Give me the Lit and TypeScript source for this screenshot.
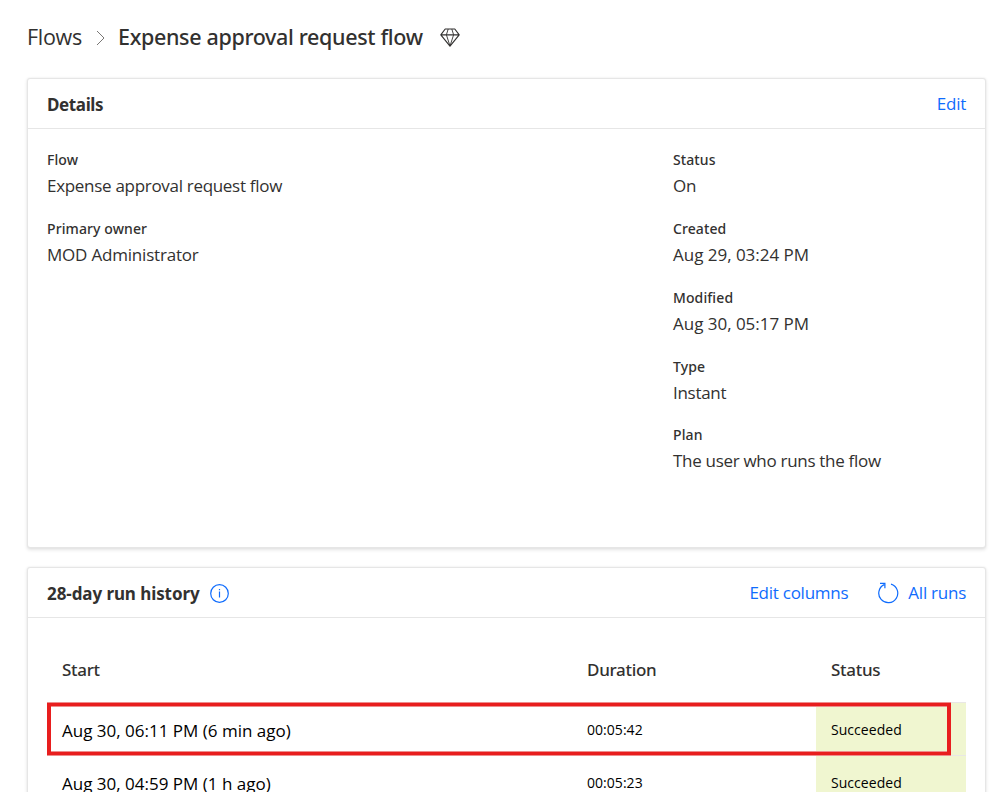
import { LitElement, html, css } from "lit";
import { customElement } from "lit/decorators.js";
import { classMap } from "lit/directives/class-map.js";

interface Field { label: string; value: string; kind?: "date" | "person"; }
interface Run { start: string; duration: string; status: string; }

const FLOW_FIELDS: Field[] = [
  { label: "Flow", value: "Expense approval request flow" },
  { label: "Primary owner", value: "MOD Administrator", kind: "person" },
];

const STATE_FIELDS: Field[] = [
  { label: "Status", value: "On" },
  { label: "Created", value: "Aug 29, 03:24 PM", kind: "date" },
  { label: "Modified", value: "Aug 30, 05:17 PM", kind: "date" },
  { label: "Type", value: "Instant" },
  { label: "Plan", value: "The user who runs the flow" },
];

const RUNS: Run[] = [
  { start: "Aug 30, 06:11 PM (6 min ago)", duration: "00:05:42", status: "Succeeded" },
  { start: "Aug 30, 04:59 PM (1 h ago)", duration: "00:05:23", status: "Succeeded" },
];

@customElement("app-root")
export class AppRoot extends LitElement {
  static styles = css`
    :host {
      display: flex;
      flex-direction: column;
      box-sizing: border-box;
      height: 792px;
      overflow: hidden;
      padding: 0 5px 0 27px;
      background: #fff;
      color: #323130;
      font-family: "Open Sans", "Noto Sans", sans-serif;
      font-size: 17px;
      line-height: 24px;
      white-space: nowrap;
    }
    svg { display: block; fill: none; flex: none; }
    .crumbs {
      display: flex;
      flex: none;
      align-items: center;
      height: 75px;
      margin-bottom: 3px;
      font-size: 21.5px;
      line-height: 30px;
    }
    .parent { width: 69px; padding-bottom: 2px; letter-spacing: -0.3px; }
    .chevron { width: 22px; }
    .title {
      width: 322px;
      padding-bottom: 2px;
      font-family: "Noto Sans", sans-serif;
      font-weight: 500;
      font-size: 21.5px;
      letter-spacing: -0.34px;
    }
    .card {
      box-sizing: border-box;
      flex: none;
      border: 1px solid #e6e6e6;
      border-radius: 3px;
      background: #fff;
      box-shadow: 0 1.6px 3.6px rgba(0, 0, 0, 0.11), 0 0 2px rgba(0, 0, 0, 0.06);
    }
    .details { height: 470px; margin-bottom: 19px; }
    .history { height: 260px; }
    .head {
      display: flex;
      align-items: center;
      height: 49px;
      padding: 0 19px;
      border-bottom: 1px solid #e6e6e6;
    }
    .heading {
      padding-top: 3px;
      font-family: "Noto Sans", sans-serif;
      font-weight: 700;
      letter-spacing: -0.38px;
    }
    .history .heading { letter-spacing: -0.08px; }
    .info { margin: 1px 0 0 10px; }
    .actions { display: flex; align-items: center; margin-left: auto; }
    .link { color: #0f6cfd; letter-spacing: -0.25px; }
    .history .link { padding-top: 1px; }
    .refresh { margin: 0 9px 0 29px; }
    .columns { display: grid; grid-template-columns: 626px 1fr; padding: 21px 19px 0; }
    .field { height: 68.85px; }
    .label {
      font-family: "Noto Sans", sans-serif;
      font-weight: 500;
      font-size: 14px;
      line-height: 20px;
      letter-spacing: 0.1px;
    }
    .value { padding-top: 4px; letter-spacing: -0.3px; }
    .value.date { letter-spacing: -0.02px; }
    .value.person { letter-spacing: -0.2px; }
    .table { margin: 40px 19px 0; position: relative; }
    .row {
      display: grid;
      grid-template-columns: 525px 244px 150px;
      height: 52px;
      border-top: 1px solid #e9e7e5;
      color: #000;
    }
    .row.names {
      height: 44px;
      border-top: 0;
      color: #323130;
      font-family: "Noto Sans", sans-serif;
      font-weight: 500;
      letter-spacing: -0.3px;
    }
    .cell { display: flex; align-items: center; padding-left: 15px; }
    .names .cell { align-items: flex-start; }
    .start { padding-top: 3px; }
    .small { padding-top: 2px; font-size: 14px; letter-spacing: 0.04px; }
    .ok { background: #f0f6d0; }
    .marker {
      position: absolute;
      box-sizing: border-box;
      left: 0;
      top: 45px;
      width: 904px;
      height: 52px;
      border: 3px solid #e81e1e;
      border-width: 3px 4px;
      box-shadow: 0 1px 0 #ee8d8d, 0 -1px 0 #ee8d8d, inset 0 1px 0 #ee8d8d, inset 0 -1px 0 #ee8d8d;
    }
  `;

  private field(f: Field) {
    const kinds = { value: true, date: f.kind === "date", person: f.kind === "person" };
    return html`<div class="field">
      <div class="label">${f.label}</div>
      <div class=${classMap(kinds)}>${f.value}</div>
    </div>`;
  }

  render() {
    return html`
      <nav class="crumbs">
        <span class="parent">Flows</span>
        <svg class="chevron" width="22" height="18" viewBox="0 0 22 18">
          <path d="M1 2l7 7-7 7" stroke="#797775" />
        </svg>
        <span class="title">Expense approval request flow</span>
        <svg width="20" height="19" viewBox="0 0 20 19" stroke="#323130" stroke-linejoin="round">
          <path d="M5.2 1h9.6l4.4 5.8L10 18.2.8 6.8zM.8 6.8h18.4" stroke-width="1.15" />
          <path d="M8.2 1L6.4 6.8 10 18l3.6-11.2L11.8 1" stroke-width="0.9" />
        </svg>
      </nav>
      <section class="card details">
        <div class="head">
          <span class="heading">Details</span>
          <div class="actions"><span class="link">Edit</span></div>
        </div>
        <div class="columns">
          <div>${FLOW_FIELDS.map((f) => this.field(f))}</div>
          <div>${STATE_FIELDS.map((f) => this.field(f))}</div>
        </div>
      </section>
      <section class="card history">
        <div class="head">
          <span class="heading">28-day run history</span>
          <svg class="info" width="19" height="19" viewBox="0 0 19 19">
            <circle cx="9.5" cy="9.5" r="8.8" stroke="#0f6cfd" stroke-width="1.2" />
            <path d="M9.5 7.6v6M9.5 5v1.3" stroke="#0f6cfd" stroke-width="1.2" />
          </svg>
          <div class="actions">
            <span class="link">Edit columns</span>
            <svg class="refresh" width="22" height="22" viewBox="0 0 22 22" stroke="#0f6cfd" stroke-width="1.2">
              <path d="M14 2.1A9.5 9.5 0 1 1 7.2 2.6M3 1.3h4.9v4.9" />
            </svg>
            <span class="link">All runs</span>
          </div>
        </div>
        <div class="table">
          <div class="row names">
            <div class="cell">Start</div>
            <div class="cell">Duration</div>
            <div class="cell">Status</div>
          </div>
          ${RUNS.map((r) => html`<div class="row">
            <div class="cell start">${r.start}</div>
            <div class="cell small">${r.duration}</div>
            <div class="cell small ok">${r.status}</div>
          </div>`)}
          <div class="marker"></div>
        </div>
      </section>
    `;
  }
}
